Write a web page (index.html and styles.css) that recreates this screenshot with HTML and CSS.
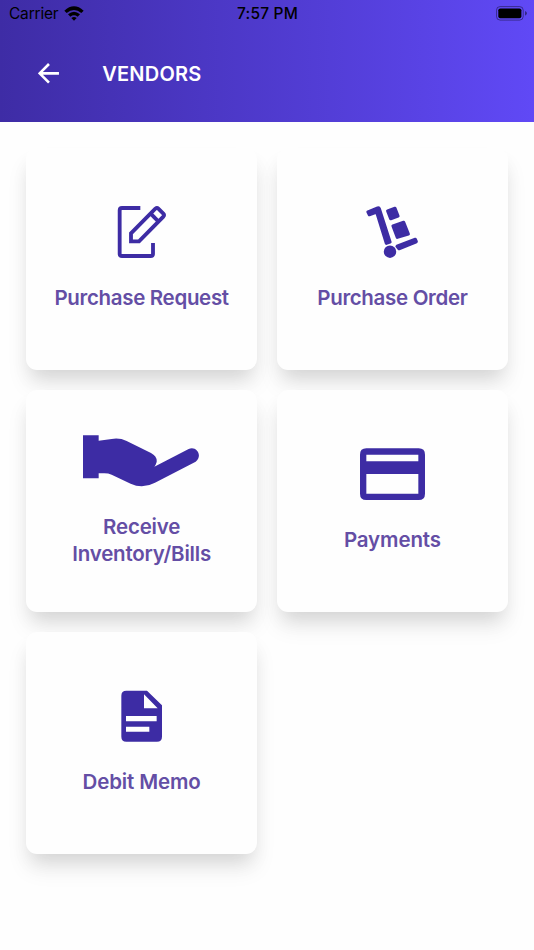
FILE: index.html
```html
<!DOCTYPE html>
<html lang="en">
<head>
<meta charset="utf-8">
<meta name="viewport" content="width=device-width, initial-scale=1">
<title>Vendors</title>
<link rel="stylesheet" href="styles.css">
</head>
<body>
	<header class="header">
		<div class="status">
			<div class="carrier">
				<span>Carrier</span>
				<svg class="wifi" viewBox="0 0 60 45">
					<path d="M1 14Q30-12 59 14L52 21Q30 3 8 21Z"/>
					<path d="M12 25Q30 10 48 25L41 32Q30 24 19 32Z"/>
					<path d="M22 36Q30 30 38 36L30 44Z"/>
				</svg>
			</div>
			<span class="time">7:57 PM</span>
			<svg class="battery" viewBox="0 0 94 45">
				<rect class="shell" x="1.5" y="1.5" width="81" height="41" rx="11"/>
				<rect x="7" y="7" width="70" height="30" rx="6"/>
				<path class="cap" d="M88 15Q94 18 94 22Q94 26 88 29Z"/>
			</svg>
		</div>
		<div class="titlebar">
			<svg class="back" viewBox="0 0 64 62">
				<path d="M63 31H5M33 3L5 31L33 59"/>
			</svg>
			<h1>VENDORS</h1>
		</div>
	</header>

	<main class="grid">
		<a class="card">
			<svg class="icon icon-edit" viewBox="50 49 150 156">
				<path d="M120 55H65Q58 55 58 62V192Q58 199 65 199H151Q158 199 158 192V160"/>
				<path d="M92 155V131L165 57Q170 53 174 57L189 72Q193 76 189 81L116 155Z"/>
				<path d="M151 72L174 95"/>
			</svg>
			<span class="label request">Purchase Request</span>
		</a>
		<a class="card">
			<svg class="icon icon-truck" viewBox="49 49 157 156">
				<path d="M55 67L84 55Q88 54 89 57L121 157L110 161L81 67L59 75Z"/>
				<path d="M114 64L136 56L145 79L123 87Z"/>
				<path d="M130 109L162 98L176 133L143 143Z"/>
				<path d="M142 170L197 149L200 156L148 177Z"/>
				<circle cx="121" cy="186" r="14"/>
			</svg>
			<span class="label order">Purchase Order</span>
		</a>
		<a class="card">
			<svg class="icon icon-hand" viewBox="39 44 350 156">
				<path d="M39 45H86V61L125 56Q149 52 170 62L243 98Q262 108 260 125Q258 133 253 139L356 86C378 75 400 105 377 124L255 187Q218 207 182 190L125 163Q115 159 103 159H86V174H39Z"/>
			</svg>
			<span class="label receive">Receive<br>Inventory/Bills</span>
		</a>
		<a class="card">
			<svg class="icon icon-card" viewBox="45 40 195 156">
				<path fill-rule="evenodd" d="M64 41H221Q240 41 240 60V177Q240 196 221 196H64Q45 196 45 177V60Q45 41 64 41ZM64 60V80H220V60ZM64 118V177H220V118Z"/>
			</svg>
			<span class="label">Payments</span>
		</a>
		<a class="card">
			<svg class="icon icon-memo" viewBox="64 32 124 156">
				<path fill-rule="evenodd" d="M80 34H142L187 78V172Q187 187 172 187H80Q65 187 65 172V49Q65 34 80 34ZM133 45V87H174ZM79 110V126H171V110ZM79 142V157H149V142Z"/>
			</svg>
			<span class="label">Debit Memo</span>
		</a>
	</main>
</body>
</html>
```
FILE: styles.css
```css
*{
	box-sizing:border-box;
}
body{
	margin:0;
	height:950px;
	overflow:hidden;
	font-family:Inter, "Liberation Sans", sans-serif;
	background-color:#fefefe;
}
.header{
	height:121.5px;
	background:linear-gradient(to right, #3e2ca5, #6049f6);
}
.status{
	display:grid;
	grid-template-columns:1fr auto 1fr;
	align-items:center;
	height:27px;
	padding:0 7px 0 9px;
	font-size:15.5px;
	color:#000;
}
.carrier{
	display:flex;
	align-items:center;
	gap:6px;
	letter-spacing:-.2px;
}
.wifi{
	width:20px;
	height:15px;
}
.time{
	margin-right:1px;
	font-weight:500;
	letter-spacing:.2px;
}
.battery{
	justify-self:end;
	width:31px;
	height:15px;
}
.shell{
	fill:none;
	stroke:#000;
	stroke-opacity:.4;
	stroke-width:3;
}
.cap{
	fill-opacity:.45;
}
.titlebar{
	display:flex;
	align-items:center;
	gap:43.5px;
	height:93.5px;
	padding-left:37.5px;
}
.back{
	width:21.3px;
	height:20.7px;
	fill:none;
	stroke:#fff;
	stroke-width:8;
}
h1{
	margin:0;
	font-size:20px;
	font-weight:600;
	letter-spacing:.2px;
	color:#fff;
}
.grid{
	display:grid;
	grid-template-columns:1fr 1fr;
	grid-auto-rows:222.6px;
	gap:19.6px;
	height:828px;
	padding:26px 26px 0;
}
.card{
	display:flex;
	flex-direction:column;
	align-items:center;
	justify-content:center;
	gap:26px;
	border-radius:11px;
	background-color:#fefefe;
	box-shadow:0 16px 22px rgba(0,0,0,.065), 0 12px 20px -7px rgba(0,0,0,.13);
}
.icon{
	height:52px;
	margin-top:-.8px;
	fill:#3d2ca4;
}
.icon-edit{
	fill:none;
	stroke:#3d2ca4;
	stroke-width:11.5;
}
.icon-truck{
	stroke:#3d2ca4;
	stroke-width:9.5;
	stroke-linejoin:round;
}
.label{
	font-size:20.5px;
	font-weight:600;
	line-height:27px;
	letter-spacing:-.12px;
	text-align:center;
	color:#644ea5;
}
.request, .order{
	letter-spacing:-.32px;
}
.receive{
	letter-spacing:-.2px;
}
```
